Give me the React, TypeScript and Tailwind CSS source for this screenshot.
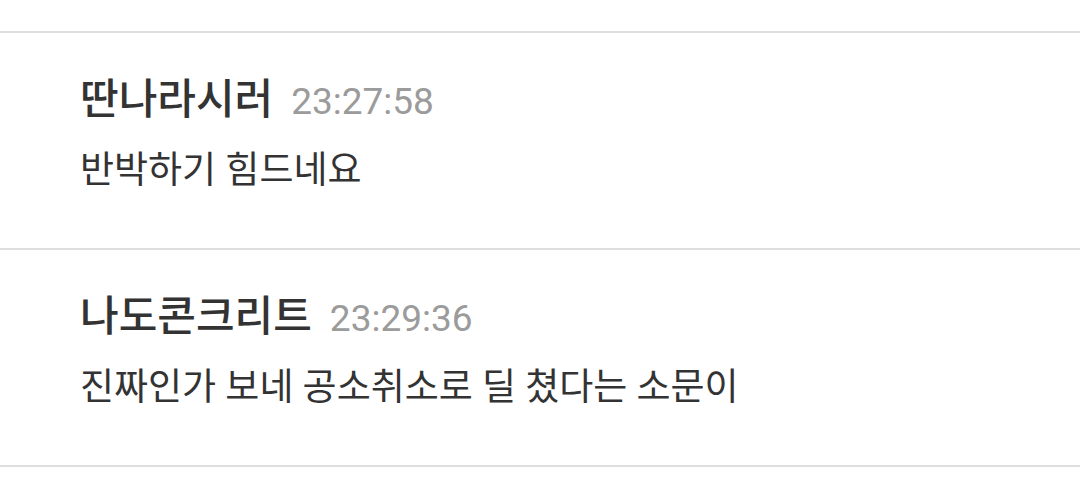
import React from 'react';

type Comment = {
    name: string;
    time: string;
    text: string;
};

const comments: Comment[] = [
    { name: '딴나라시러', time: '23:27:58', text: '반박하기 힘드네요' },
    { name: '나도콘크리트', time: '23:29:36', text: '진짜인가 보네 공소취소로 딜 쳤다는 소문이' },
];

const CommentRow: React.FC<{ comment: Comment }> = ({ comment }) => (
    <li className="border-t-2 border-[#dedede] pl-[80px] pr-6 pt-[43px] pb-[53px]">
        <div className="flex items-baseline gap-[18px] h-[48px] leading-[48px]">
            <span className="text-[42px] font-medium text-[#333333]">{comment.name}</span>
            <span className="text-[37px] text-[#9b9b9b]">{comment.time}</span>
        </div>
        <p className="mt-[23px] h-[48px] leading-[48px] text-[37px] text-[#333333]">{comment.text}</p>
    </li>
);

const App: React.FC = () => {
    return (
        <div
            className="w-[1080px] h-[504px] bg-white overflow-hidden pt-[31px]"
            style={{ fontFamily: 'Roboto, "Noto Sans CJK KR", sans-serif' }}
        >
            <ul className="border-b-2 border-[#dedede]">
                {comments.map(c => (
                    <CommentRow key={c.time} comment={c} />
                ))}
            </ul>
        </div>
    );
};

export default App;
